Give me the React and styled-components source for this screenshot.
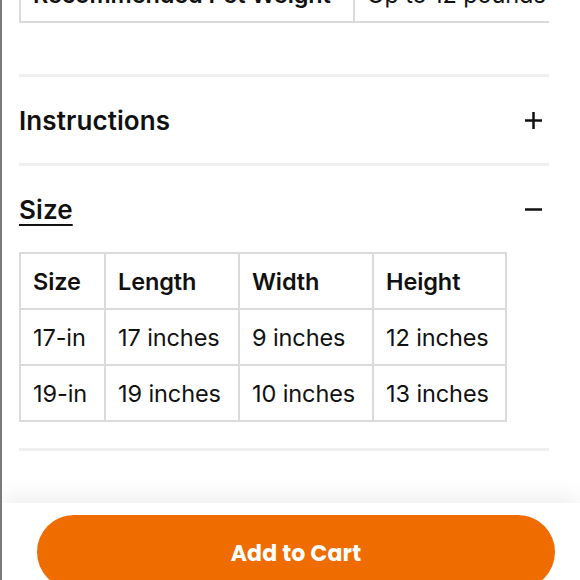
import React from "react";
import styled, { createGlobalStyle } from "styled-components";

const Global = createGlobalStyle`
  html, body { margin: 0; padding: 0; background: #fff; }
  body { overflow: hidden; font-family: Inter, "Noto Sans", sans-serif; color: #111; }
`;

const Frame = styled.div`
  width: 578px;
  height: 580px;
  border-left: 2px solid #7a7a7a;
  display: flex;
  flex-direction: column;
  overflow: hidden;
`;

const Scroll = styled.div`
  flex: 1;
  min-height: 0;
  overflow: hidden;
  padding: 0 31px 0 17px;
`;

const Clip = styled.div`
  overflow: hidden;
  margin-top: ${(p) => p.$offset || 0}px;
`;

const Table = styled.table`
  border-collapse: collapse;
  table-layout: fixed;
  width: ${(p) => p.$w}px;
  font-size: 23.5px;
  color: #111;
  white-space: nowrap;
`;

const Cell = styled.td`
  border: 2px solid #dadada;
  height: 56px;
  padding: 0 12px;
  font-weight: ${(p) => (p.$head ? 600 : 400)};
  width: ${(p) => (p.$w ? `${p.$w}px` : "auto")};
  box-sizing: border-box;
  letter-spacing: -0.1px;
  overflow: hidden;
`;

const Divider = styled.div`
  height: 3px;
  background: #efefef;
  margin-top: ${(p) => p.$top || 0}px;
`;

const Header = styled.div`
  height: 86px;
  display: flex;
  align-items: center;
  justify-content: space-between;
  padding-right: 6px;
`;

const Title = styled.span`
  font-size: 26px;
  font-weight: 600;
  color: #111;
  text-decoration: ${(p) => (p.$open ? "underline" : "none")};
  text-underline-offset: 5px;
  text-decoration-thickness: 2px;
  letter-spacing: 0.1px;
`;

const Bar = styled.div`
  flex: none;
  height: 77px;
  background: #fff;
  position: relative;
  z-index: 1;
  box-shadow: 0 -6px 22px rgba(0, 0, 0, 0.07);
  padding: 12px 25px 0 35px;
  overflow: hidden;
  box-sizing: border-box;
`;

const CartButton = styled.button`
  width: 100%;
  height: 74px;
  border: none;
  border-radius: 37px;
  background: #ee6c00;
  color: #fff;
  font-family: Poppins, Inter, "Noto Sans", sans-serif;
  font-size: 22px;
  font-weight: 700;
  display: flex;
  align-items: flex-start;
  justify-content: center;
  padding-top: 22px;
  box-sizing: border-box;
  letter-spacing: 0.2px;
`;

const Plus = () => (
  <svg width="19" height="19" viewBox="0 0 19 19">
    <path d="M9.5 1v17M1 9.5h17" stroke="#111" strokeWidth="2.5" fill="none" />
  </svg>
);
const Minus = () => (
  <svg width="19" height="19" viewBox="0 0 19 19">
    <path d="M1 9.5h17" stroke="#111" strokeWidth="2.5" fill="none" />
  </svg>
);

const sizes = [
  ["17-in", "17 inches", "9 inches", "12 inches"],
  ["19-in", "19 inches", "10 inches", "13 inches"],
];

export default function App() {
  return (
    <>
      <Global />
      <Frame>
        <Scroll>
          <Clip $offset={-35}>
            <Table $w={600}>
              <tbody>
                <tr>
                  <Cell $head $w={334}>Recommended Pet Weight</Cell>
                  <Cell $w={266}>Up to 12 pounds</Cell>
                </tr>
              </tbody>
            </Table>
          </Clip>
          <Divider $top={51} />
          <Header>
            <Title>Instructions</Title>
            <Plus />
          </Header>
          <Divider />
          <Header>
            <Title $open>Size</Title>
            <Minus />
          </Header>
          <Table $w={486}>
            <tbody>
              <tr>
                <Cell $head $w={85}>Size</Cell>
                <Cell $head $w={134}>Length</Cell>
                <Cell $head $w={134}>Width</Cell>
                <Cell $head $w={133}>Height</Cell>
              </tr>
              {sizes.map((r) => (
                <tr key={r[0]}>
                  {r.map((c) => (
                    <Cell key={c}>{c}</Cell>
                  ))}
                </tr>
              ))}
            </tbody>
          </Table>
          <Divider $top={26} />
        </Scroll>
        <Bar>
          <CartButton>Add to Cart</CartButton>
        </Bar>
      </Frame>
    </>
  );
}
